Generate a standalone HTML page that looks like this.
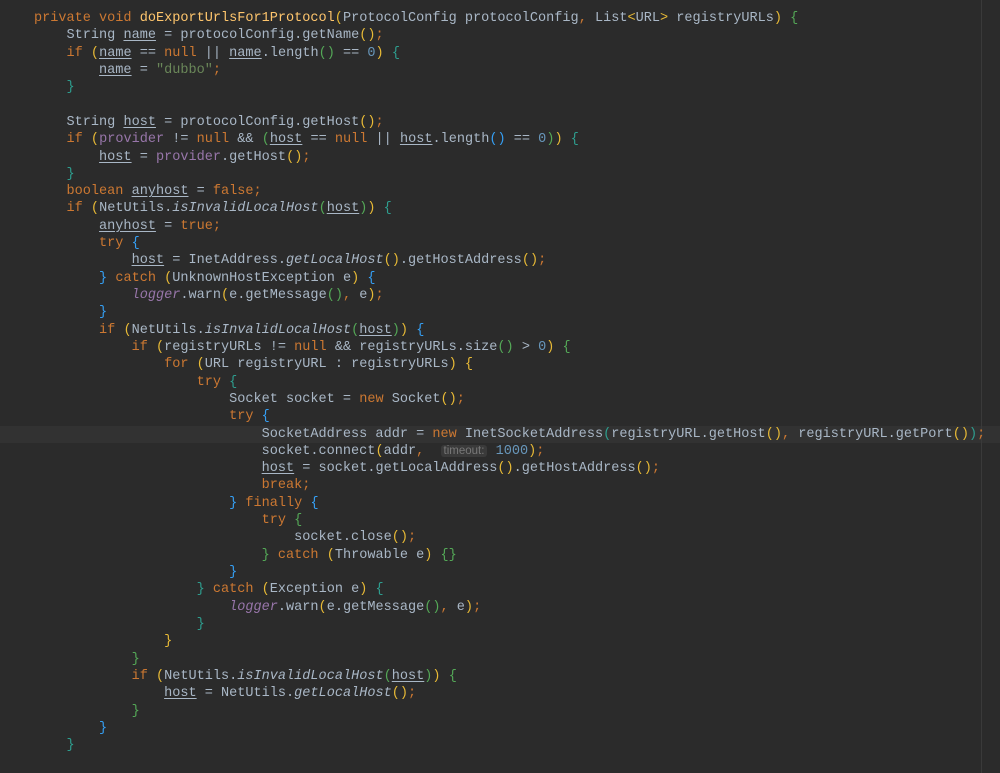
<!DOCTYPE html><html><head><meta charset="utf-8"><style>
body{margin:0;background:#2b2b2b;width:1000px;height:773px;overflow:hidden}
pre{margin:0;position:absolute;left:34px;top:10px;font-family:"Liberation Mono",monospace;font-size:13.55px;line-height:17.31px;color:#a9b7c6}
.hl{position:absolute;left:0;width:1000px;top:425.5px;height:17.3px;background:#323232}
.vl{position:absolute;left:981px;top:0;width:1px;height:773px;background:#3a3a3a}
.k{color:#cc7832}.m{color:#ffc66d}.p{color:#9876aa}.s{color:#6a8759}.n{color:#6897bb}.i{font-style:italic}
.y{color:#e8ba36}.g{color:#54a857}.b{color:#359ff4}.t{color:#2e9e8f}
.u{text-decoration:underline;text-underline-offset:2px}
.h{background:#3a3a3a;color:#787878;font-family:"Liberation Sans",sans-serif;font-size:11.5px;border-radius:3px;padding:0 3px}
</style></head><body><div class="hl"></div><div class="vl"></div><pre><span class="k">private void </span><span class="m">doExportUrlsFor1Protocol</span><span class="y">(</span>ProtocolConfig protocolConfig<span class="k">, </span>List<span class="y">&lt;</span>URL<span class="y">&gt;</span> registryURLs<span class="y">)</span> <span class="g">{</span>
    String <span class="u">name</span> = protocolConfig.getName<span class="y">()</span><span class="k">;</span>
    <span class="k">if </span><span class="y">(</span><span class="u">name</span> == <span class="k">null </span>|| <span class="u">name</span>.length<span class="g">()</span> == <span class="n">0</span><span class="y">)</span> <span class="t">{</span>
        <span class="u">name</span> = <span class="s">"dubbo"</span><span class="k">;</span>
    <span class="t">}</span>

    String <span class="u">host</span> = protocolConfig.getHost<span class="y">()</span><span class="k">;</span>
    <span class="k">if </span><span class="y">(</span><span class="p">provider</span> != <span class="k">null </span>&amp;&amp; <span class="g">(</span><span class="u">host</span> == <span class="k">null </span>|| <span class="u">host</span>.length<span class="b">()</span> == <span class="n">0</span><span class="g">)</span><span class="y">)</span> <span class="t">{</span>
        <span class="u">host</span> = <span class="p">provider</span>.getHost<span class="y">()</span><span class="k">;</span>
    <span class="t">}</span>
    <span class="k">boolean </span><span class="u">anyhost</span> = <span class="k">false;</span>
    <span class="k">if </span><span class="y">(</span>NetUtils.<span class="i">isInvalidLocalHost</span><span class="g">(</span><span class="u">host</span><span class="g">)</span><span class="y">)</span> <span class="t">{</span>
        <span class="u">anyhost</span> = <span class="k">true;</span>
        <span class="k">try </span><span class="b">{</span>
            <span class="u">host</span> = InetAddress.<span class="i">getLocalHost</span><span class="y">()</span>.getHostAddress<span class="y">()</span><span class="k">;</span>
        <span class="b">}</span> <span class="k">catch </span><span class="y">(</span>UnknownHostException e<span class="y">)</span> <span class="b">{</span>
            <span class="p i">logger</span>.warn<span class="y">(</span>e.getMessage<span class="g">()</span><span class="k">, </span>e<span class="y">)</span><span class="k">;</span>
        <span class="b">}</span>
        <span class="k">if </span><span class="y">(</span>NetUtils.<span class="i">isInvalidLocalHost</span><span class="g">(</span><span class="u">host</span><span class="g">)</span><span class="y">)</span> <span class="b">{</span>
            <span class="k">if </span><span class="y">(</span>registryURLs != <span class="k">null </span>&amp;&amp; registryURLs.size<span class="g">()</span> &gt; <span class="n">0</span><span class="y">)</span> <span class="g">{</span>
                <span class="k">for </span><span class="y">(</span>URL registryURL : registryURLs<span class="y">)</span> <span class="y">{</span>
                    <span class="k">try </span><span class="t">{</span>
                        Socket socket = <span class="k">new </span>Socket<span class="y">()</span><span class="k">;</span>
                        <span class="k">try </span><span class="b">{</span>
                            SocketAddress addr = <span class="k">new </span>InetSocketAddress<span class="t">(</span>registryURL.getHost<span class="y">()</span><span class="k">, </span>registryURL.getPort<span class="y">()</span><span class="t">)</span><span class="k">;</span>
                            socket.connect<span class="y">(</span>addr<span class="k">, </span> <span class="h">timeout:</span> <span class="n">1000</span><span class="y">)</span><span class="k">;</span>
                            <span class="u">host</span> = socket.getLocalAddress<span class="y">()</span>.getHostAddress<span class="y">()</span><span class="k">;</span>
                            <span class="k">break;</span>
                        <span class="b">}</span> <span class="k">finally </span><span class="b">{</span>
                            <span class="k">try </span><span class="g">{</span>
                                socket.close<span class="y">()</span><span class="k">;</span>
                            <span class="g">}</span> <span class="k">catch </span><span class="y">(</span>Throwable e<span class="y">)</span> <span class="g">{}</span>
                        <span class="b">}</span>
                    <span class="t">}</span> <span class="k">catch </span><span class="y">(</span>Exception e<span class="y">)</span> <span class="t">{</span>
                        <span class="p i">logger</span>.warn<span class="y">(</span>e.getMessage<span class="g">()</span><span class="k">, </span>e<span class="y">)</span><span class="k">;</span>
                    <span class="t">}</span>
                <span class="y">}</span>
            <span class="g">}</span>
            <span class="k">if </span><span class="y">(</span>NetUtils.<span class="i">isInvalidLocalHost</span><span class="g">(</span><span class="u">host</span><span class="g">)</span><span class="y">)</span> <span class="g">{</span>
                <span class="u">host</span> = NetUtils.<span class="i">getLocalHost</span><span class="y">()</span><span class="k">;</span>
            <span class="g">}</span>
        <span class="b">}</span>
    <span class="t">}</span></pre></body></html>
